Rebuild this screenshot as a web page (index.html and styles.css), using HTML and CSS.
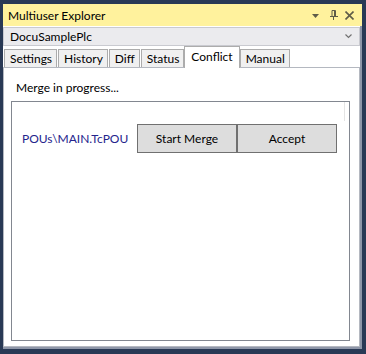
FILE: index.html
```html
<!DOCTYPE html>
<html>
<head>
<meta charset="utf-8">
<link rel="stylesheet" href="styles.css">
</head>
<body>
<div class="window">
  <div class="titlebar">
    <span class="title">Multiuser Explorer</span>
    <div class="tb-icons">
      <svg class="ic-drop" width="7" height="4" viewBox="0 0 7 4"><path d="M0 0H7L3.5 4Z" fill="#5e5c48"/></svg>
      <svg class="ic-pin" width="8" height="10" viewBox="0 0 8 10"><path d="M2 0.5H5.5V6.5M2 0.5V6.5M4.5 0.5V6.5M0 6.5H8M3.5 6.5V10" stroke="#5e5c48" stroke-width="1" fill="none"/></svg>
      <svg class="ic-close" width="9" height="9" viewBox="0 0 9 9"><path d="M0.5 0.5L8.5 8.5M8.5 0.5L0.5 8.5" stroke="#5e5c48" stroke-width="1.6"/></svg>
    </div>
  </div>
  <div class="body">
    <div class="combo">
      <span class="combo-text">DocuSamplePlc</span>
      <svg class="chev" width="7" height="5" viewBox="0 0 7 5"><path d="M0.5 0.5L3.5 3.5L6.5 0.5" stroke="#717171" stroke-width="1.2" fill="none"/></svg>
    </div>
    <div class="tabs">
      <div class="tab">Settings</div>
      <div class="tab">History</div>
      <div class="tab">Diff</div>
      <div class="tab">Status</div>
      <div class="tab active">Conflict</div>
      <div class="tab">Manual</div>
    </div>
    <div class="panel">
      <div class="status">Merge in progress...</div>
      <div class="list">
        <div class="row">
          <span class="path">POUs\MAIN.TcPOU</span>
          <div class="btns">
            <button class="btn">Start Merge</button>
            <button class="btn">Accept</button>
          </div>
        </div>
        <div class="scrollhint"></div>
      </div>
    </div>
  </div>
</div>
</body>
</html>
```
FILE: styles.css
```css
* { box-sizing: border-box; }
body {
  margin: 0;
  background: #293955;
  font-family: Lato, "Noto Sans", sans-serif;
  font-size: 12px;
  color: #000;
}
.window {
  margin: 4px 4px 0 3px;
  height: 345px;
  display: flex;
  flex-direction: column;
}
.titlebar {
  height: 22px;
  background: #fff29d;
  display: flex;
  align-items: center;
  padding: 0 8px 0 5px;
}
.title { flex: 1; }
.tb-icons {
  display: flex;
  align-items: center;
}
.ic-drop { margin-right: 11px; margin-top: 1px; }
.ic-pin { margin-right: 7px; }
.body {
  flex: 1;
  display: flex;
  flex-direction: column;
  background: #fff;
  border-right: 2px solid #8e96a8;
  border-bottom: 2px solid #8e96a8;
  padding-top: 1px;
}
.combo {
  height: 19px;
  background: #ebebee;
  border: 1px solid #c9cad0;
  display: flex;
  align-items: center;
  padding: 0 7px 0 6px;
}
.combo-text { flex: 1; }
.tabs {
  height: 21px;
  display: flex;
  align-items: flex-end;
  padding-left: 1px;
  gap: 1px;
  position: relative;
  z-index: 1;
}
.tab {
  height: 18px;
  padding: 0 4px 0 5px;
  display: flex;
  align-items: center;
  background: #f0f0f0;
  border: 1px solid #acacac;
  border-bottom: none;
}
.tab.active {
  height: 22px;
  margin: 0 -1px -1px -1px;
  background: #fff;
  padding: 0 6px 2px;
  position: relative;
}
.panel {
  flex: 1;
  display: flex;
  flex-direction: column;
  border: 1px solid #b4b8c0;
  padding: 12px 9px 5px 7px;
}
.status {
  line-height: 16px;
  margin-left: 5px;
  margin-bottom: 5px;
}
.list {
  flex: 1;
  border: 1px solid #828790;
  padding: 22px 0 0 10px;
  position: relative;
}
.row {
  display: flex;
  align-items: center;
}
.path {
  width: 115px;
  color: #24248c;
}
.btns { display: flex; }
.btn {
  width: 100px;
  height: 29px;
  background: #dddddd;
  border: 1px solid #707070;
  font-family: inherit;
  font-size: 12px;
  color: #000;
  padding: 0;
  margin: 0;
}
.scrollhint {
  position: absolute;
  top: 0;
  right: 4px;
  width: 1px;
  height: 19px;
  background: #e4e4e4;
}
```
